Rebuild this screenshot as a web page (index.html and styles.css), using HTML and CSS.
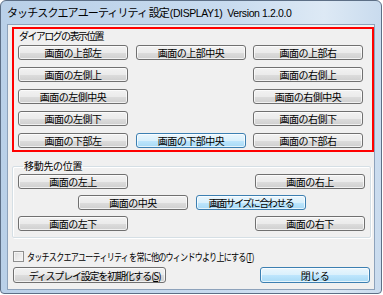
FILE: index.html
```html
<!DOCTYPE html>
<html lang="ja">
<head>
<meta charset="utf-8">
<link rel="stylesheet" href="styles.css">
</head>
<body>
<div class="window">
  <div class="titlebar"><span class="tjp">タッチスクエアユーティリティ 設定</span><span class="tlat">(DISPLAY1)&nbsp;&nbsp;Version 1.2.0.0</span></div>
  <div class="client">
    <div class="redbox">
      <div class="caption">ダイアログの表示位置</div>
      <div class="grid3">
        <button class="btn">画面の上部左</button>
        <button class="btn">画面の上部中央</button>
        <button class="btn">画面の上部右</button>
        <button class="btn">画面の左側上</button>
        <span></span>
        <button class="btn">画面の右側上</button>
        <button class="btn">画面の左側中央</button>
        <span></span>
        <button class="btn">画面の右側中央</button>
        <button class="btn">画面の左側下</button>
        <span></span>
        <button class="btn">画面の右側下</button>
        <button class="btn">画面の下部左</button>
        <button class="btn blue">画面の下部中央</button>
        <button class="btn">画面の下部右</button>
      </div>
    </div>
    <fieldset class="group">
      <legend class="legend">移動先の位置</legend>
      <div class="row sides">
        <button class="btn">画面の左上</button>
        <button class="btn">画面の右上</button>
      </div>
      <div class="row center">
        <button class="btn">画面の中央</button>
        <button class="btn blue narrow">画面サイズに合わせる</button>
      </div>
      <div class="row sides">
        <button class="btn">画面の左下</button>
        <button class="btn">画面の右下</button>
      </div>
    </fieldset>
    <label class="check"><span class="box"></span><span class="checktext">タッチスクエアユーティリティ を常に他のウィンドウより上にする(<u>T</u>)</span></label>
    <div class="bottom">
      <button class="btn wide">ディスプレイ設定を初期化する(<u>S</u>)</button>
      <button class="btn blue close">閉じる</button>
    </div>
  </div>
</div>
</body>
</html>
```

FILE: styles.css
```css
* { box-sizing: border-box; }
html, body { margin: 0; padding: 0; }
body {
  width: 383px;
  height: 295px;
  overflow: hidden;
  background: #ffffff;
  font-family: "Noto Sans CJK JP", "Noto Sans", sans-serif;
}
.window {
  width: 382px;
  height: 294px;
  border: 1px solid #5d6f86;
  border-radius: 6px 6px 4px 4px;
  background: linear-gradient(90deg, #b9d0e8 0%, #c8dbef 60%, #dde9f5 85%, #c9dbee 100%);
  display: flex;
  flex-direction: column;
}
.titlebar {
  height: 23px;
  padding: 4px 0 0 6px;
  font-size: 11px;
  line-height: 15px;
  color: #000;
  white-space: nowrap;
}
.tjp { letter-spacing: -0.9px; }
.tlat { font-family: "Liberation Sans", sans-serif; font-size: 10.5px; letter-spacing: -0.4px; padding-left: 1px; }
.client {
  margin: 0 6px 0 6px;
  width: 368px;
  height: 266px;
  border: 1px solid #8da2bb;
  background: #f0f0f0;
  padding: 2px 0 0 4px;
  display: flex;
  flex-direction: column;
}
.redbox {
  width: 362px;
  height: 125px;
  border: 2px solid #ff0000;
  padding: 1px 0 0 4px;
}
.caption {
  font-size: 10px;
  line-height: 12px;
  height: 12px;
  padding-left: 1px;
  letter-spacing: -1.6px;
  color: #000;
}
.grid3 {
  margin-top: 3px;
  display: grid;
  grid-template-columns: 110px 110px 110px;
  column-gap: 8px;
  row-gap: 7px;
}
.grid3 > .btn:nth-child(3n) { margin-left: -1px; }
.btn {
  height: 15px;
  width: 110px;
  margin: 0;
  padding: 0;
  border: 1px solid #707070;
  border-radius: 3px;
  background: linear-gradient(#f2f2f2 0%, #ebebeb 50%, #dddddd 51%, #cfcfcf 100%);
  box-shadow: inset 0 0 0 1px rgba(255,255,255,0.7);
  font-family: "Noto Sans CJK JP", "Noto Sans", sans-serif;
  font-size: 10px;
  line-height: 13px;
  color: #000;
  letter-spacing: -0.5px;
  text-align: center;
  white-space: nowrap;
  overflow: hidden;
}
.btn.blue {
  border-color: #3c7fb1;
  background: linear-gradient(#eaf6fd 0%, #d9f0fc 50%, #bee6fd 51%, #a7d9f5 100%);
}
.btn.narrow { letter-spacing: -1.5px; }
.group {
  margin: 8px 0 0 0;
  padding: 2px 0 0 5px;
  width: 359px;
  height: 78px;
  border: 1px solid #d5dfe5;
  border-radius: 2px;
  box-shadow: inset 1px 1px 0 #fff, 1px 1px 0 #fff;
  min-width: 0;
}
.legend {
  padding: 0 1px;
  margin-left: 5px;
  font-size: 10px;
  line-height: 12px;
  letter-spacing: -0.3px;
}
.row {
  display: flex;
  height: 15px;
}
.row + .row { margin-top: 6px; }
.sides { justify-content: space-between; width: 347px; }
.center { gap: 8px; padding-left: 60px; }
.check {
  display: flex;
  align-items: center;
  margin: 13px 0 0 1px;
  height: 11px;
  gap: 3px;
}
.box {
  width: 11px;
  height: 11px;
  border: 1px solid #8e8f8f;
  background: linear-gradient(135deg, #dcdcdc, #f8f8f8);
  box-shadow: inset 0 0 0 1px #f4f4f4;
  flex: none;
}
.checktext {
  display: inline-block;
  font-size: 10px;
  line-height: 12px;
  letter-spacing: -1px;
  white-space: nowrap;
  transform: scaleX(0.81);
  transform-origin: left center;
}
.bottom {
  margin-top: 5px;
  display: flex;
  padding-left: 1px;
  height: 16px;
}
.bottom .btn { height: 16px; }
.wide { width: 153px; letter-spacing: -1.2px; padding-left: 10px; }
.close { margin-left: 94px; width: 110px; }
u { text-decoration: underline; }
```
